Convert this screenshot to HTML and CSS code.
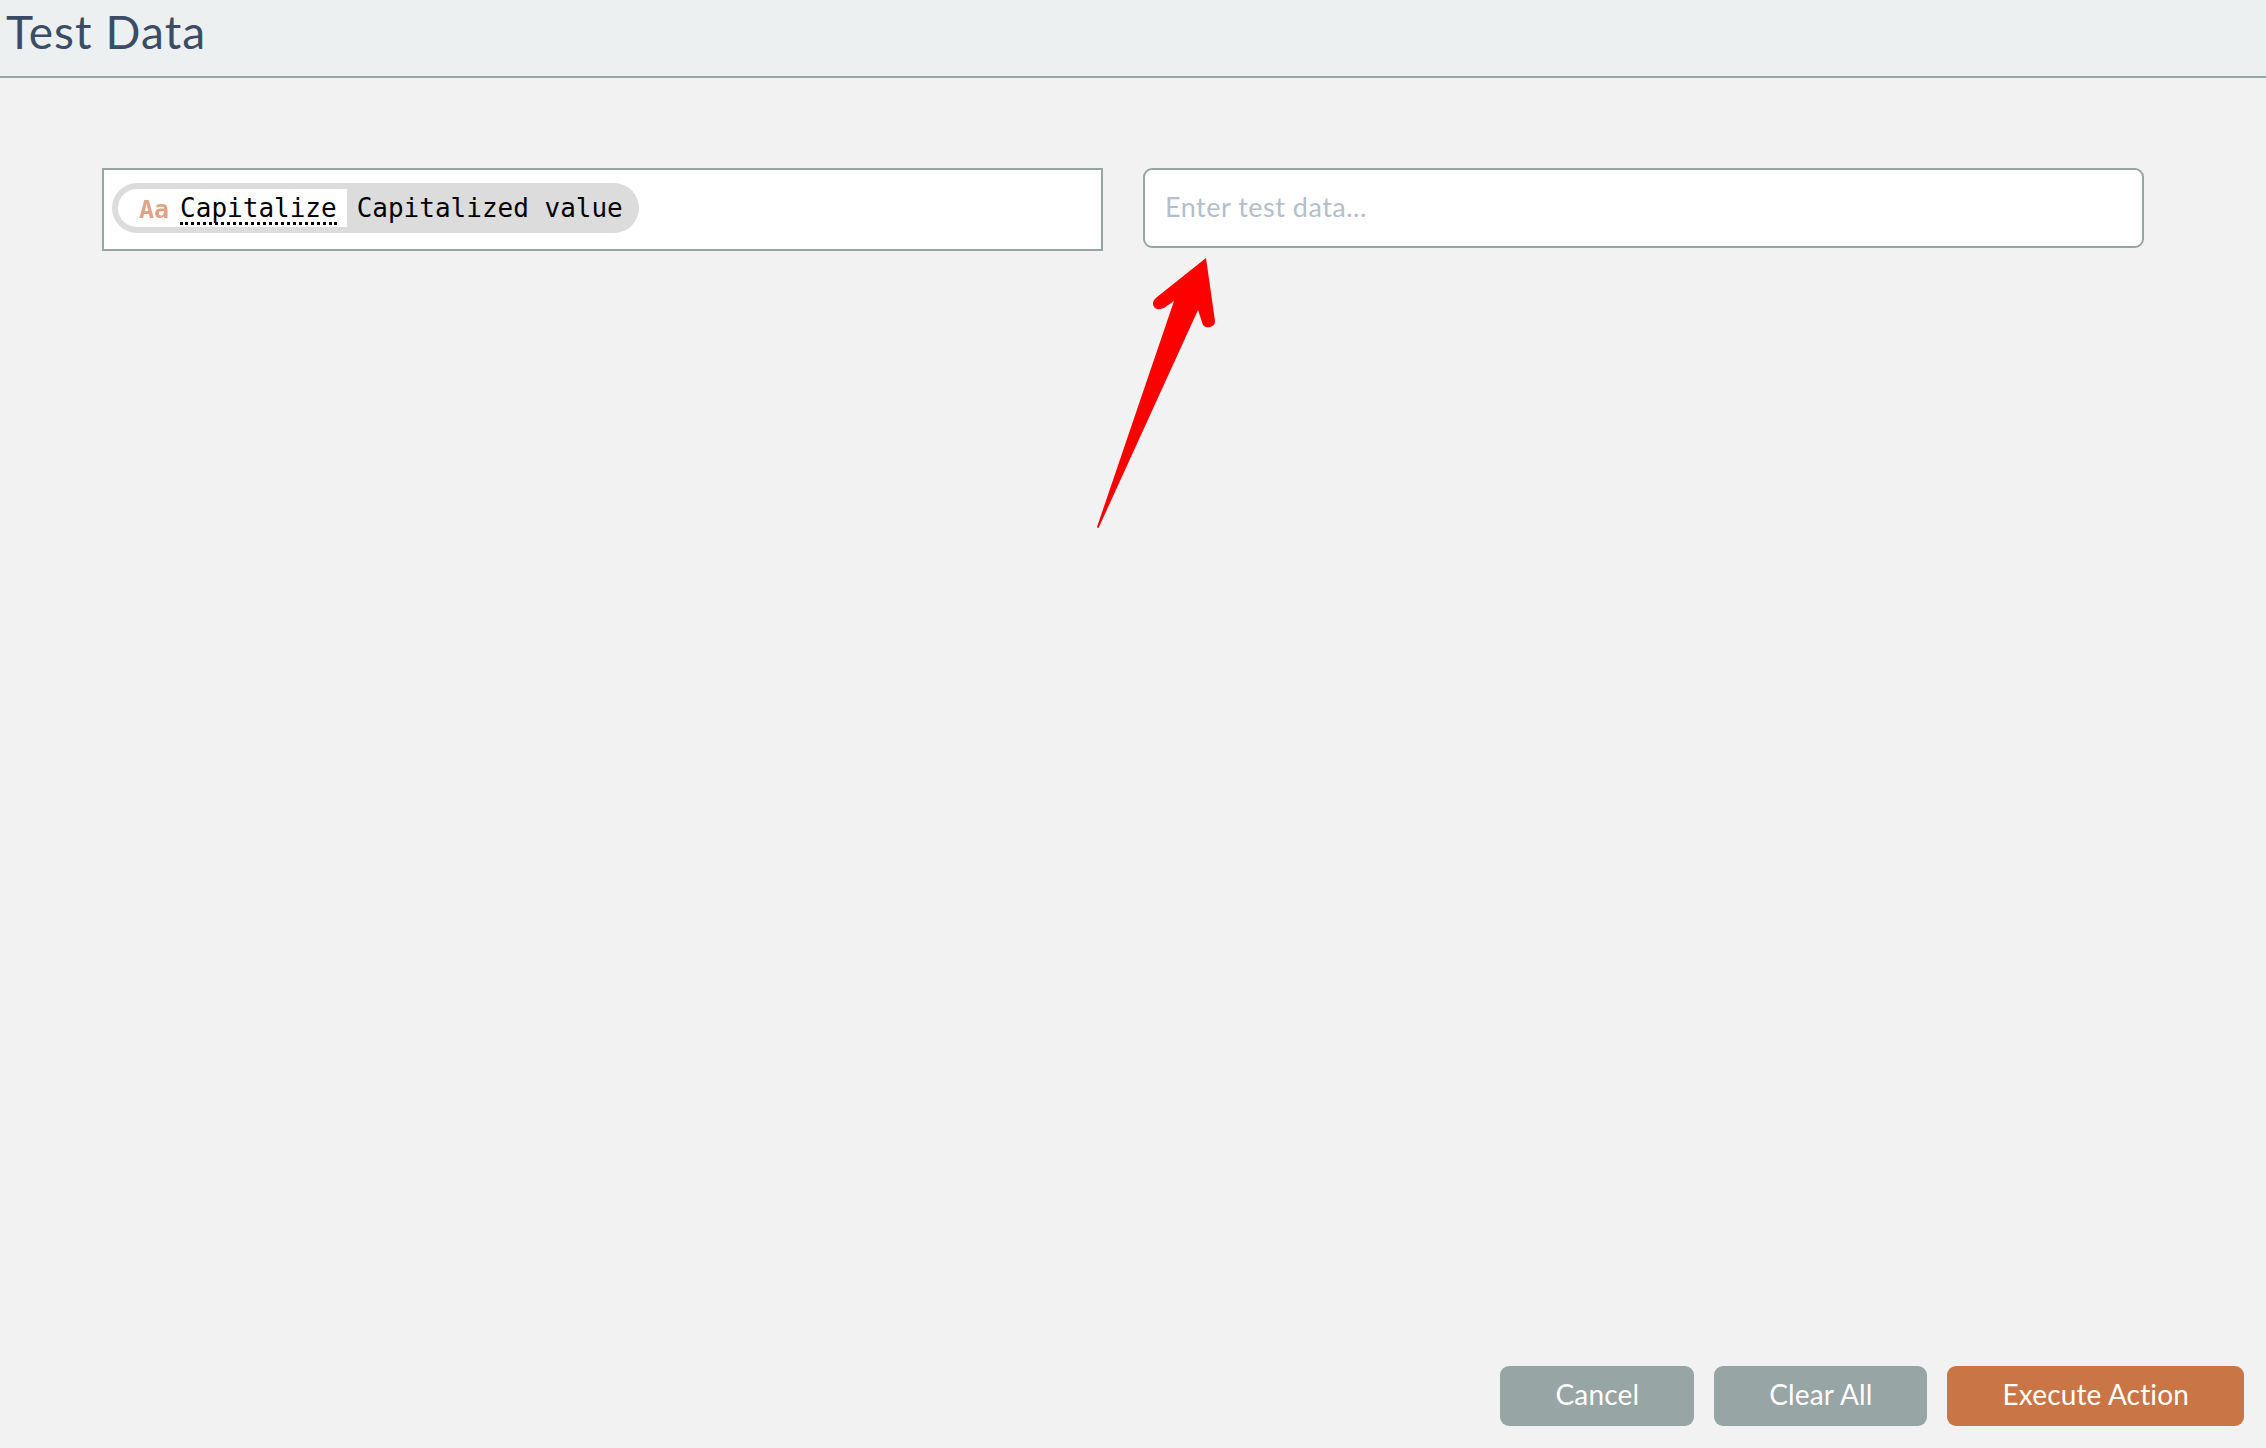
FILE: index.html
```html
<!doctype html>
<html>
<head>
 <title>Test Data</title>
 <meta name=viewport content="width=device-width, initial-scale=1">
 <link rel="stylesheet" href="styles.css">
</head>
<body>
<div class=header>Test Data</div>
<div class=main>
 <div class=preview>
  <span class=pill>
   <span class=fn><span class=fn-icon>Aa</span> <span class=fn-name>Capitalize</span></span>
   <span class=fn-value>Capitalized value</span>
  </span>
 </div>
 <input class=testdata placeholder="Enter test data...">
</div>
<div class=footer>
 <button class=btn>Cancel</button>
 <button class=btn>Clear All</button>
 <button class="btn btn-primary">Execute Action</button>
</div>
<svg class=arrow viewBox="0 0 135 285" width=135 height=285>
 <path fill="#f00" d="M116 8 L67 47 C62 51 62 55 65 58 C68 60 71 59 74 58 L84 51 L7 277 Q8 279 9 277 L108 60 L112 72 C113 77 117 78 120 77 C124 76 125 74 125 71 Z"/>
</svg>
</body>
</html>
```

FILE: styles.css
```css
html, body {height: 100%;}
body {
  margin: 0;
  display: flex;
  flex-direction: column;
  background-color: #f2f2f2;
  font-family: Lato, "Open Sans", sans-serif;
}
.header {
  height: 76px;
  padding-left: 6px;
  line-height: 64px;
  font-size: 46px;
  letter-spacing: 1.1px;
  color: #3b4d66;
  background-color: #edf0f1;
  border-bottom: 2px solid #98a5a5;
}
.main {
  flex: 1;
  display: grid;
  grid-template-columns: 1fr 1fr;
  align-items: start;
  gap: 40px;
  padding: 90px 122px 0 102px;
}
.preview {
  box-sizing: border-box;
  height: 83px;
  padding: 13px 8px;
  background-color: white;
  border: 2px solid #98a5a5;
}
.pill {
  display: inline-flex;
  align-items: center;
  height: 50px;
  box-sizing: border-box;
  padding: 6px 16px 6px 6px;
  border-radius: 25px;
  background-color: #dcdcdc;
  font-family: "DejaVu Sans Mono", monospace;
  font-size: 26px;
  color: black;
}
.fn {
  display: flex;
  align-items: center;
  height: 38px;
  padding: 0 10px 0 21px;
  gap: 11px;
  margin-right: 10px;
  background-color: white;
  border-radius: 19px 0 0 19px;
}
.fn-icon {
  font-size: 25px;
  font-weight: bold;
  color: #e2a488;
  filter: blur(0.6px);
  padding-top: 3px;
}
.fn-name {
  border-bottom: 3px dotted black;
  line-height: 29px;
  height: 28px;
  margin-top: 2px;
}
.testdata {
  box-sizing: border-box;
  width: 100%;
  height: 80px;
  padding: 0 20px 4px;
  background-color: white;
  border: 2px solid #98a5a5;
  border-radius: 9px;
  outline: none;
  font-family: inherit;
  font-size: 27px;
  letter-spacing: 0.5px;
}
.testdata::placeholder {color: #b4bfc9;}
.footer {
  display: flex;
  justify-content: flex-end;
  gap: 20px;
  padding: 0 22px 22px 0;
}
.btn {
  height: 60px;
  padding: 0 55px 5px;
  border: 0;
  border-radius: 9px;
  background-color: #98a5a5;
  color: white;
  font-family: inherit;
  font-size: 28px;
  letter-spacing: 0.15px;
}
.btn-primary {background-color: #c97546;}
/* red annotation drawn over the page */
.arrow {
  position: absolute;
  left: 1090px;
  top: 250px;
}
```
